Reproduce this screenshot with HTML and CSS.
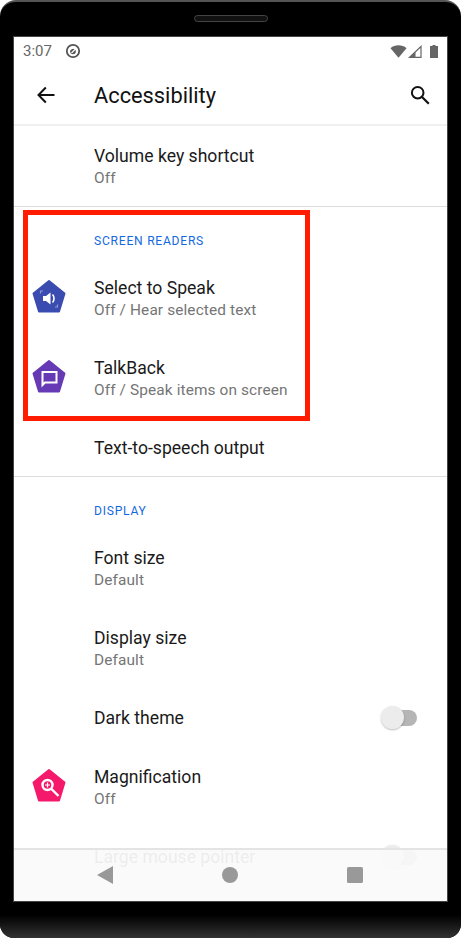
FILE: index.html
```html
<!DOCTYPE html>
<html lang="en">
<head>
    <meta charset="UTF-8">
    <meta name="viewport" content="width=device-width, initial-scale=1.0">
    <title>Accessibility</title>
    <link rel="stylesheet" href="styles.css">
</head>
<body>
    <div class="device">
        <div class="bezel-top"><div class="speaker"></div></div>
        <div class="screen">
            <div class="status-bar">
                <span class="clock">3:07</span>
                <svg class="status-app" width="16" height="16" viewBox="0 0 16 16">
                    <circle cx="8" cy="8" r="6.2" fill="none" stroke="#555" stroke-width="1.8"/>
                    <circle cx="8" cy="8.5" r="2.8" fill="#555"/>
                    <path d="M5 6.5 L10.5 3.8 M11.5 5 L6.5 10" stroke="#fff" stroke-width="1.1"/>
                </svg>
                <div class="status-right">
                    <svg width="17" height="13" viewBox="0 0 17 13"><path d="M0.5 3.2 C4.8 -0.6 12.2 -0.6 16.5 3.2 L8.5 12.8 Z" fill="#666"/></svg>
                    <svg class="status-signal" width="14" height="13" viewBox="0 0 14 13"><path d="M13 1.5 V12.3 H1.5 Z" fill="#fff" stroke="#666" stroke-width="1.2"/><path d="M7.5 7 V12.3 H1.5 Z" fill="#666"/></svg>
                    <svg class="status-battery" width="8" height="13" viewBox="0 0 8 13"><path d="M2.5 0 H5.5 V1 H8 V13 H0 V1 H2.5 Z" fill="#666"/></svg>
                </div>
            </div>
            <div class="app-bar">
                <svg class="back" width="18" height="18" viewBox="0 0 18 18"><path d="M17.5 9 H1.5 M8.8 1.5 L1.5 9 L8.8 16.5" fill="none" stroke="#111" stroke-width="2"/></svg>
                <h1>Accessibility</h1>
                <svg class="search" width="20" height="20" viewBox="0 0 20 20"><circle cx="7.7" cy="7.7" r="5.8" fill="none" stroke="#111" stroke-width="2"/><path d="M12 12 L18.8 18.8" stroke="#111" stroke-width="2.2"/></svg>
            </div>
            <div class="list">
                <div class="row">
                    <div class="slot"></div>
                    <div><div class="title">Volume key shortcut</div><div class="sub">Off</div></div>
                </div>
                <div class="section divided">Screen readers</div>
                <div class="row">
                    <div class="slot">
                        <svg width="34" height="34" viewBox="0 0 34 34">
                            <path d="M17 0 L32.5 12.5 L27 30.5 H7 L1.5 12.5 Z" fill="#3b4cb0" stroke="#3b4cb0" stroke-width="2" stroke-linejoin="round"/>
                            <path d="M11 15 H14 L18.5 11.5 V23.5 L14 20 H11 Z" fill="#fff"/>
                            <path d="M20.5 13.5 C22.5 15.5 22.5 19.5 20.5 21.5" fill="none" stroke="#fff" stroke-width="1.6"/>
                            <path d="M8.5 12.5 V10 H11 M25.5 23.5 V26 H23" fill="none" stroke="#8d97d4" stroke-width="1.2"/>
                        </svg>
                    </div>
                    <div><div class="title">Select to Speak</div><div class="sub">Off / Hear selected text</div></div>
                </div>
                <div class="row">
                    <div class="slot">
                        <svg width="34" height="34" viewBox="0 0 34 34">
                            <path d="M17 0 L32.5 12.5 L27 30.5 H7 L1.5 12.5 Z" fill="#673ab5" stroke="#673ab5" stroke-width="2" stroke-linejoin="round"/>
                            <path d="M10.5 11 H24.5 V21.5 H13 L10.5 24 Z" fill="none" stroke="#fff" stroke-width="2"/>
                        </svg>
                    </div>
                    <div><div class="title">TalkBack</div><div class="sub">Off / Speak items on screen</div></div>
                </div>
                <div class="row single">
                    <div class="slot"></div>
                    <div class="title">Text-to-speech output</div>
                </div>
                <div class="section divided">Display</div>
                <div class="row">
                    <div class="slot"></div>
                    <div><div class="title">Font size</div><div class="sub">Default</div></div>
                </div>
                <div class="row">
                    <div class="slot"></div>
                    <div><div class="title">Display size</div><div class="sub">Default</div></div>
                </div>
                <div class="row single gap-after">
                    <div class="slot"></div>
                    <div class="title">Dark theme</div>
                    <div class="toggle"><span class="thumb"></span></div>
                </div>
                <div class="row">
                    <div class="slot">
                        <svg width="34" height="34" viewBox="0 0 34 34">
                            <path d="M17 0 L32.5 12.5 L27 30.5 H7 L1.5 12.5 Z" fill="#f5196b" stroke="#f5196b" stroke-width="2" stroke-linejoin="round"/>
                            <circle cx="15.5" cy="15" r="5" fill="#f5196b" stroke="#fff" stroke-width="2.4"/>
                            <path d="M15.5 12.5 V17.5 M13 15 H18" stroke="#fff" stroke-width="1.2"/>
                            <path d="M19.5 19 L26.5 26" stroke="#fff" stroke-width="2.4"/>
                        </svg>
                    </div>
                    <div><div class="title">Magnification</div><div class="sub">Off</div></div>
                </div>
                <div class="row single">
                    <div class="slot"></div>
                    <div class="title">Large mouse pointer</div>
                    <div class="toggle"><span class="thumb"></span></div>
                </div>
            </div>
            <div class="nav-bar">
                <svg width="16" height="18" viewBox="0 0 16 18"><path d="M16 0 V18 L0 9 Z" fill="#999"/></svg>
                <svg width="16" height="16" viewBox="0 0 16 16"><circle cx="8" cy="8" r="8" fill="#999"/></svg>
                <svg width="16" height="16" viewBox="0 0 16 16"><rect width="16" height="16" rx="1.5" fill="#999"/></svg>
            </div>
            <div class="highlight"></div>
        </div>
        <div class="chin"></div>
    </div>
</body>
</html>
```

FILE: styles.css
```css
* {
    box-sizing: border-box;
}
body {
    margin: 0;
    background: #fff;
    font-family: Roboto, sans-serif;
}
.device {
    width: 461px;
    height: 938px;
    padding: 0 14px;
    background: #000;
    border-top: 2px solid #555;
    border-radius: 16px 16px 14px 14px;
    position: relative;
    overflow: hidden;
}
.bezel-top {
    height: 35px;
    display: flex;
    justify-content: center;
    padding-top: 13px;
}
.speaker {
    width: 74px;
    height: 7px;
    background: #111;
    border: 1px solid #444;
    border-radius: 4px;
}
.screen {
    height: 864px;
    background: #fff;
    position: relative;
    overflow: hidden;
    box-shadow: 0 0 0 1px #444;
}
.chin {
    position: absolute;
    left: 0;
    right: 0;
    bottom: 0;
    height: 23px;
    background: linear-gradient(#000, #333);
}
.status-bar {
    height: 28px;
    display: flex;
    align-items: center;
    padding: 0 9px;
    color: #666;
    font-size: 15px;
}
.clock {
    width: 42px;
}
.status-right {
    margin-left: auto;
    display: flex;
    align-items: center;
}
.status-signal {
    margin-left: 1px;
}
.status-battery {
    margin-left: 8px;
}
.app-bar {
    height: 61px;
    display: flex;
    align-items: center;
    border-bottom: 2px solid #f0f0f0;
    padding: 2px 17px 0 23px;
}
.app-bar svg {
    margin-bottom: 2px;
}
.app-bar h1 {
    margin: 0 0 0 39px;
    font-size: 21.8px;
    font-weight: 400;
    color: #111;
}
.search {
    margin-left: auto;
}
.row {
    height: 80px;
    display: flex;
    align-items: center;
    padding: 2px 30px 0 0;
}
.row.single {
    height: 58px;
}
.gap-after {
    margin-bottom: 1px;
}
.slot {
    width: 80px;
    padding-left: 18px;
    margin-bottom: 2px;
    flex: none;
    display: flex;
}
.slot svg {
    overflow: visible;
}
.title {
    font-size: 17.6px;
    line-height: 22px;
    color: #1a1a1a;
}
.sub {
    font-size: 15.4px;
    line-height: 21px;
    padding-top: 1px;
    letter-spacing: 0.12px;
    color: #757575;
}
.section {
    height: 51px;
    padding: 27px 0 0 80px;
    font-size: 12.1px;
    line-height: 14px;
    letter-spacing: 0.75px;
    text-transform: uppercase;
    color: #1469e0;
}
.divided {
    height: 52px;
    border-top: 1px solid #dcdcdc;
}
.toggle {
    margin-left: auto;
    width: 36px;
    height: 16px;
    background: linear-gradient(90deg, #fff 30%, #b5b5b5 30%);
    border-radius: 8px;
    position: relative;
}
.thumb {
    position: absolute;
    left: 0;
    top: -4px;
    width: 23px;
    height: 23px;
    border-radius: 50%;
    background: #ececec;
    box-shadow: 0 1px 2px rgba(0, 0, 0, 0.25);
}
.nav-bar {
    position: absolute;
    left: 0;
    right: 0;
    bottom: 0;
    height: 53px;
    display: flex;
    justify-content: space-between;
    align-items: center;
    padding: 0 84px 2px 83px;
    background: rgba(250, 250, 250, 0.94);
    border-top: 2px solid #e4e4e4;
}
.highlight {
    position: absolute;
    left: 9px;
    top: 173px;
    width: 287px;
    height: 211px;
    border: 5px solid #ff1c00;
}
```
